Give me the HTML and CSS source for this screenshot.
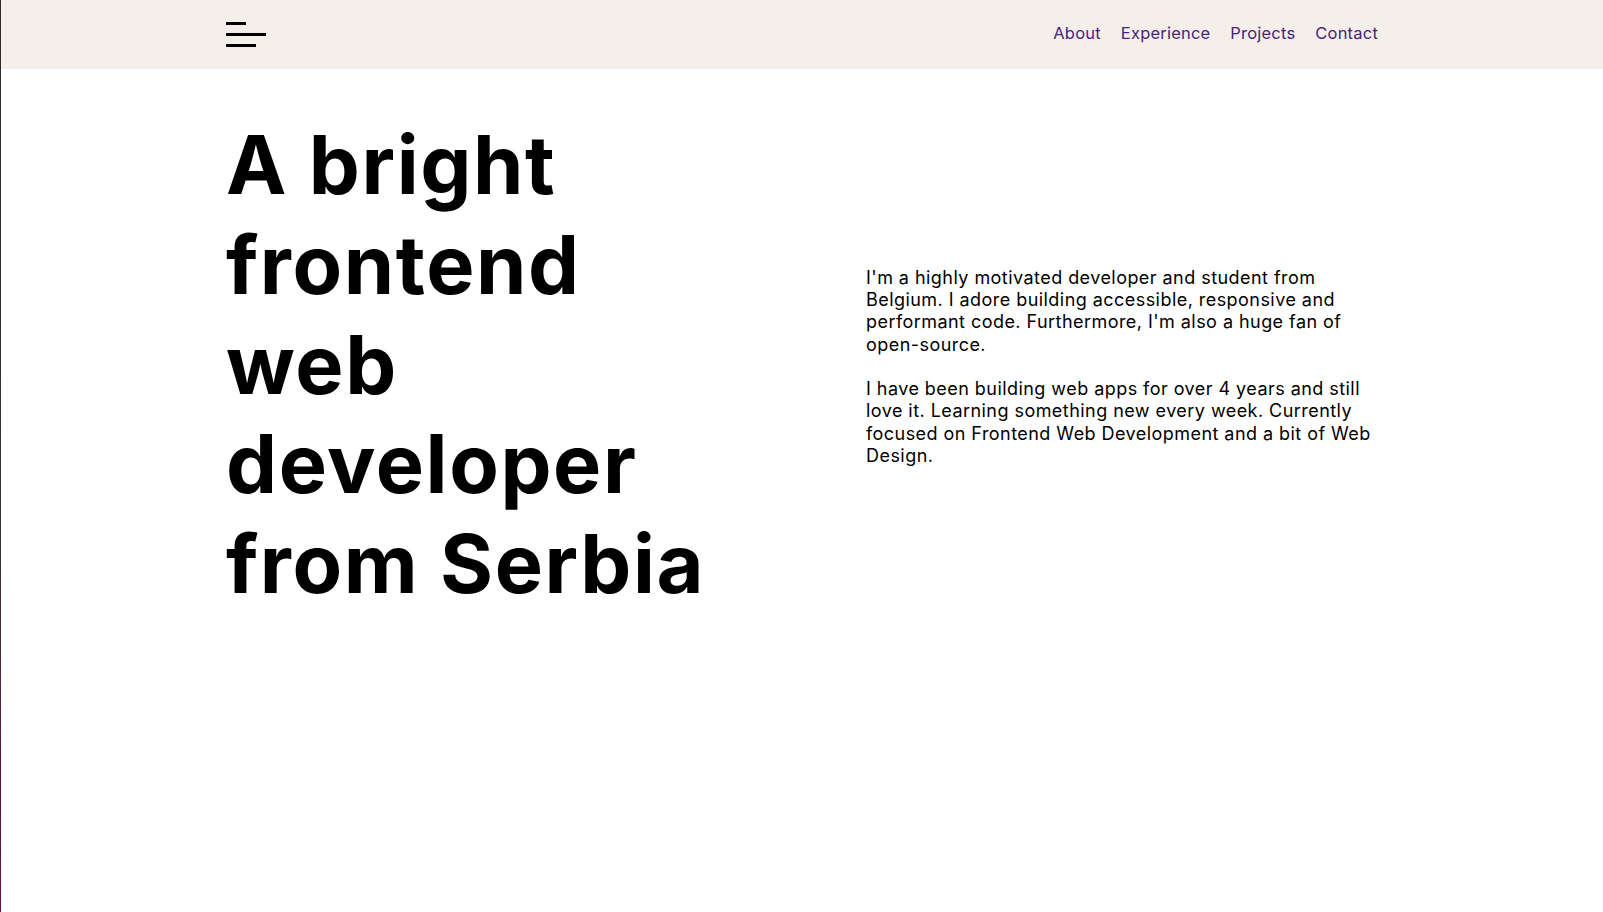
FILE: index.html
```html
<!DOCTYPE html>
<html lang="en">
<head>
<meta charset="utf-8">
<title>Portfolio</title>
<link rel="stylesheet" href="styles.css">
</head>
<body>
<header class="site-header">
  <div class="container header-inner">
    <button class="menu-btn" aria-label="Open menu">
      <span class="bar bar-short"></span>
      <span class="bar bar-long"></span>
      <span class="bar bar-mid"></span>
    </button>
    <nav class="nav">
      <a href="#about">About</a>
      <a href="#experience">Experience</a>
      <a href="#projects">Projects</a>
      <a href="#contact">Contact</a>
    </nav>
  </div>
</header>
<main class="container hero">
  <h1 class="hero-title">A bright frontend web developer from Serbia</h1>
  <div class="hero-text">
    <p>I'm a highly motivated developer and student from Belgium. I adore building accessible, responsive and performant code. Furthermore, I'm also a huge fan of open-source.</p>
    <p>I have been building web apps for over 4 years and still love it. Learning something new every week. Currently focused on Frontend Web Development and a bit of Web Design.</p>
  </div>
</main>
</body>
</html>
```

FILE: styles.css
```css
* { box-sizing: border-box; }

html, body {
  margin: 0;
  padding: 0;
}

body {
  min-height: 100vh;
  background: #ffffff;
  color: #000;
  font-family: "Inter", "Open Sans", sans-serif;
  border-left: 1px solid #2e2a2a;
  border-image: linear-gradient(to bottom, #2f2b2b 0%, #3a3535 60%, #5b1a43 85%, #6a1446 100%) 1;
}

.container {
  width: 1152px;
  margin: 0 auto;
}

.site-header {
  background: #f4efe8;
  height: 69px;
}

.header-inner {
  height: 100%;
  display: flex;
  align-items: center;
  justify-content: space-between;
}

.menu-btn {
  display: flex;
  flex-direction: column;
  gap: 8px;
  padding: 0;
  border: 0;
  background: none;
  width: 40px;
  cursor: pointer;
}

.bar {
  display: block;
  height: 3px;
  background: #000;
}
.bar-short { width: 20px; }
.bar-long { width: 40px; }
.bar-mid { width: 30px; }

.nav {
  display: flex;
  gap: 20px;
  padding-bottom: 4px;
}

.nav a {
  color: #4a227e;
  text-decoration: none;
  font-size: 16.5px;
  letter-spacing: 0.2px;
}

.hero {
  display: grid;
  grid-template-columns: 1fr 1fr;
  column-gap: 128px;
  align-items: center;
  padding-top: 47px;
}

.hero-title {
  margin: 0;
  font-size: 81px;
  line-height: 99.8px;
  font-weight: 700;
  letter-spacing: 1.6px;
}

.hero-text {
  padding-top: 3px;
}

.hero-text p {
  margin: 0 0 21.5px;
  font-size: 18px;
  line-height: 22.4px;
  letter-spacing: 0.45px;
}
.hero-text p:last-child { margin-bottom: 0; }
```
